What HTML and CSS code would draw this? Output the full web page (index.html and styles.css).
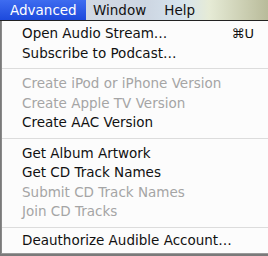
FILE: index.html
```html
<!DOCTYPE html>
<html lang="en">
<head>
    <meta charset="UTF-8">
    <title>Advanced menu</title>
    <link rel="stylesheet" href="styles.css">
</head>
<body>
    <div class="menubar">
        <span class="top-item active">Advanced</span>
        <span class="top-item">Window</span>
        <span class="top-item">Help</span>
    </div>
    <div class="menu">
        <div class="item"><span>Open Audio Stream…</span><span class="key">⌘U</span></div>
        <div class="item">Subscribe to Podcast…</div>
        <div class="sep"></div>
        <div class="item off">Create iPod or iPhone Version</div>
        <div class="item off">Create Apple TV Version</div>
        <div class="item">Create AAC Version</div>
        <div class="sep"></div>
        <div class="item">Get Album Artwork</div>
        <div class="item">Get CD Track Names</div>
        <div class="item off">Submit CD Track Names</div>
        <div class="item off">Join CD Tracks</div>
        <div class="sep last"></div>
        <div class="item">Deauthorize Audible Account…</div>
    </div>
</body>
</html>
```

FILE: styles.css
```css
body {
    margin: 0;
    padding: 0;
    width: 268px;
    height: 256px;
    overflow: hidden;
    font-family: "DejaVu Sans", "Liberation Sans", sans-serif;
    background: #7a7a7a;
}
.menubar {
    display: flex;
    height: 20px;
    border-bottom: 1px solid #222;
    background: linear-gradient(to right, #d9dde6 0%, #cdd6e2 55%, #d6e4ee 68%, #e6ebd6 78%, #b9bb9a 100%);
}
.top-item {
    display: flex;
    align-items: center;
    font-size: 13.5px;
    color: #111;
    margin-left: 18px;
}
.top-item.active {
    box-sizing: border-box;
    width: 86px;
    margin-left: 0;
    padding-left: 10px;
    color: #fff;
    background: linear-gradient(#3e6cf0, #1d49dc);
}
.top-item.active + .top-item {
    margin-left: 7px;
}
.menu {
    margin-left: 1px;
    height: 233px;
    background: #fcfcfc;
    border-left: 1px solid #8a8a8a;
    border-bottom: 1px solid #9a9a9a;
    padding-top: 3px;
    box-sizing: border-box;
}
.item {
    display: flex;
    justify-content: space-between;
    height: 19.5px;
    line-height: 19.5px;
    padding: 0 14px 0 20px;
    font-size: 13.5px;
    color: #111;
}
.item.off {
    color: #a5a5a5;
}
.key {
    font-size: 13px;
}
.sep {
    height: 1px;
    margin: 5px 0;
    background: #dcdcdc;
}
.sep.last {
    margin-bottom: 3px;
}
```
